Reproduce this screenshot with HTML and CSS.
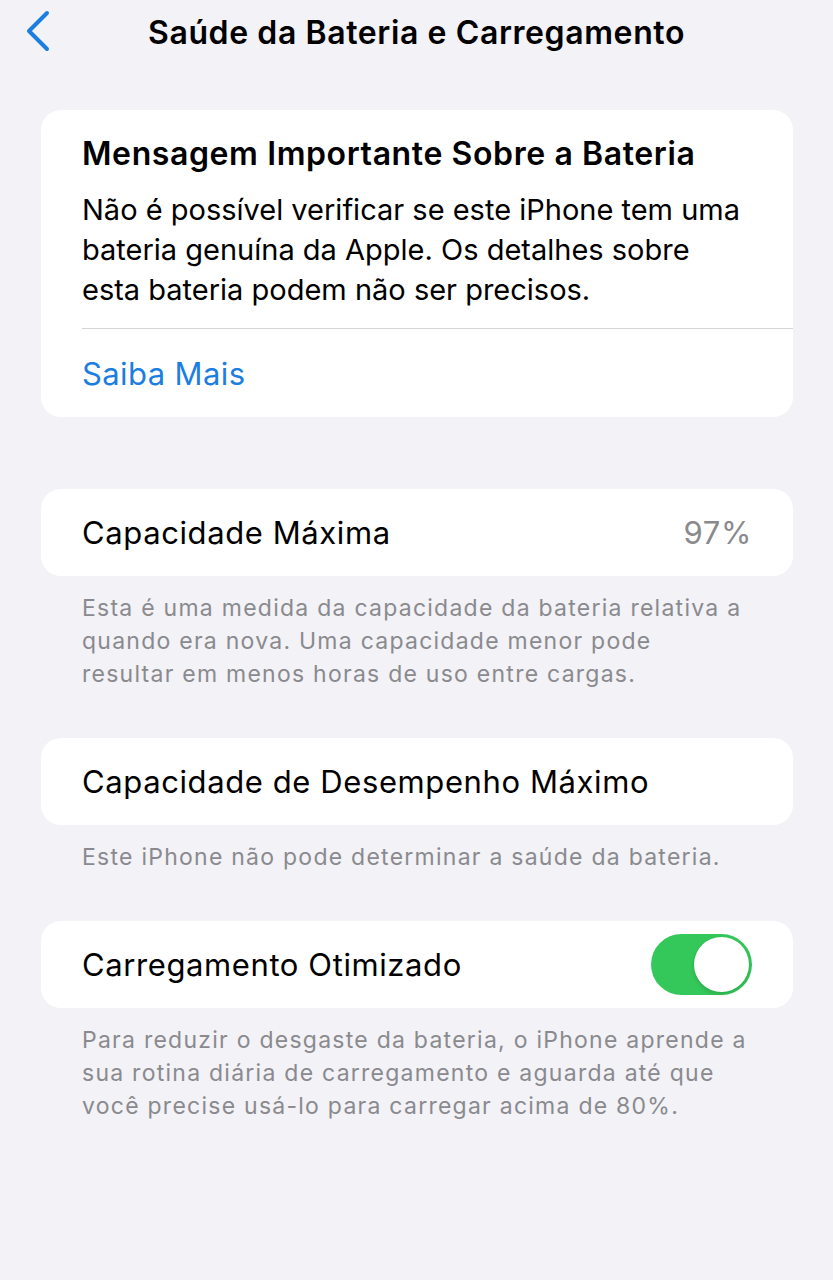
FILE: index.html
```html
<!DOCTYPE html>
<html lang="pt-BR">
<head>
    <meta charset="UTF-8">
    <meta name="viewport" content="width=device-width, initial-scale=1.0">
    <title>Saúde da Bateria e Carregamento</title>
    <link rel="stylesheet" href="styles.css">
</head>
<body>

    <div class="navbar">
        <a class="back" href="#">
            <svg width="26" height="42" viewBox="0 0 26 42">
                <path d="M22 3 L4 21 L22 39" fill="none" stroke="#1c7ee0" stroke-width="4" stroke-linecap="round" stroke-linejoin="round"/>
            </svg>
        </a>
        <h1>Saúde da Bateria e Carregamento</h1>
    </div>

    <div class="card notice">
        <h2>Mensagem Importante Sobre a Bateria</h2>
        <p>Não é possível verificar se este iPhone tem uma<br>bateria genuína da Apple. Os detalhes sobre<br>esta bateria podem não ser precisos.</p>
        <div class="divider"></div>
        <a class="link" href="#">Saiba Mais</a>
    </div>

    <div class="card row">
        <span>Capacidade Máxima</span>
        <span class="value">97%</span>
    </div>
    <p class="footnote">Esta é uma medida da capacidade da bateria relativa a<br>quando era nova. Uma capacidade menor pode<br>resultar em menos horas de uso entre cargas.</p>

    <div class="card row">
        <span>Capacidade de Desempenho Máximo</span>
    </div>
    <p class="footnote">Este iPhone não pode determinar a saúde da bateria.</p>

    <div class="card row">
        <span>Carregamento Otimizado</span>
        <div class="toggle on"><div class="knob"></div></div>
    </div>
    <p class="footnote">Para reduzir o desgaste da bateria, o iPhone aprende a<br>sua rotina diária de carregamento e aguarda até que<br>você precise usá-lo para carregar acima de 80%.</p>

</body>
</html>
```

FILE: styles.css
```css
body {
    margin: 0;
    background: #f2f2f7;
    font-family: Inter, "Liberation Sans", sans-serif;
    color: #000;
    height: 1280px;
    overflow: hidden;
}

.navbar {
    position: relative;
    height: 64px;
    display: flex;
    align-items: center;
    justify-content: center;
}

.back {
    position: absolute;
    left: 25px;
    top: 10px;
    display: block;
}

h1 {
    margin: 0;
    font-size: 32px;
    font-weight: 600;
    letter-spacing: 0.6px;
}

.card {
    background: #fff;
    border-radius: 20px;
    margin: 0 40px 0 41px;
}

.notice {
    margin-top: 46px;
    padding: 24px 0 0 41px;
    height: 283px;
    margin-bottom: 72px;
}

h2 {
    margin: 0;
    font-size: 32px;
    font-weight: 600;
    line-height: 40px;
    letter-spacing: 0.6px;
}

.notice p {
    margin: 16px 0 0;
    font-size: 29px;
    line-height: 40px;
}

.divider {
    height: 1px;
    background: #d4d4d8;
    margin-top: 18px;
}

.link {
    display: block;
    margin-top: 26px;
    color: #1c7ee0;
    font-size: 31px;
    letter-spacing: 0.4px;
    text-decoration: none;
}

.row {
    height: 87px;
    display: flex;
    align-items: center;
    justify-content: space-between;
    padding: 0 41px;
    font-size: 31px;
    letter-spacing: 0.6px;
}

.value {
    color: #8a8a8e;
}

.footnote {
    margin: 16px 0 47px;
    padding: 0 82px;
    font-size: 23px;
    line-height: 33px;
    letter-spacing: 1.25px;
    color: #8a8a8e;
}

.toggle {
    width: 101px;
    height: 61px;
    border-radius: 31px;
    background: #e5e5ea;
    display: flex;
    align-items: center;
    padding: 0 3px;
    box-sizing: border-box;
}

.toggle.on {
    background: #34c759;
    justify-content: flex-end;
}

.knob {
    width: 55px;
    height: 55px;
    border-radius: 50%;
    background: #fff;
    box-shadow: 0 2px 4px rgba(0, 0, 0, 0.15);
}
```
